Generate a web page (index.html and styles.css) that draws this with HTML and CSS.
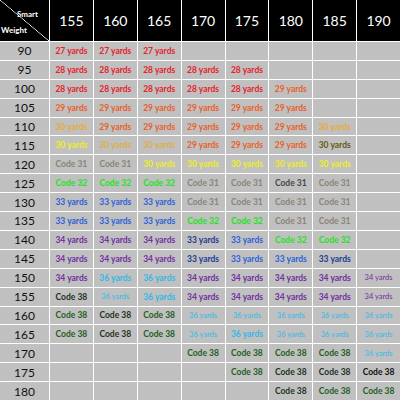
FILE: index.html
```html
<!doctype html>
<html lang="en">
	<head>
		<meta charset="UTF-8">
		<title>Smart / Weight</title>
		<link rel="stylesheet" href="styles.css">
	</head>
	<body>
		<div class="tableau">
			<div class="coin"><span class="smart">Smart</span><span class="weight">Weight</span></div>
			<div class="entete">155</div>
			<div class="entete">160</div>
			<div class="entete">165</div>
			<div class="entete">170</div>
			<div class="entete">175</div>
			<div class="entete">180</div>
			<div class="entete">185</div>
			<div class="entete">190</div>

			<div class="poids">90</div>
			<div class="case rouge">27 yards</div>
			<div class="case rouge">27 yards</div>
			<div class="case rouge">27 yards</div>
			<div class="case"></div>
			<div class="case"></div>
			<div class="case"></div>
			<div class="case"></div>
			<div class="case"></div>

			<div class="poids">95</div>
			<div class="case rouge">28 yards</div>
			<div class="case rouge">28 yards</div>
			<div class="case rouge">28 yards</div>
			<div class="case rouge">28 yards</div>
			<div class="case rouge">28 yards</div>
			<div class="case"></div>
			<div class="case"></div>
			<div class="case"></div>

			<div class="poids">100</div>
			<div class="case rouge">28 yards</div>
			<div class="case rouge">28 yards</div>
			<div class="case rouge">28 yards</div>
			<div class="case rouge">28 yards</div>
			<div class="case rouge">28 yards</div>
			<div class="case orange">29 yards</div>
			<div class="case"></div>
			<div class="case"></div>

			<div class="poids">105</div>
			<div class="case orange">29 yards</div>
			<div class="case orange">29 yards</div>
			<div class="case orange">29 yards</div>
			<div class="case orange">29 yards</div>
			<div class="case orange">29 yards</div>
			<div class="case orange">29 yards</div>
			<div class="case"></div>
			<div class="case"></div>

			<div class="poids">110</div>
			<div class="case clair">30 yards</div>
			<div class="case orange">29 yards</div>
			<div class="case orange">29 yards</div>
			<div class="case orange">29 yards</div>
			<div class="case orange">29 yards</div>
			<div class="case orange">29 yards</div>
			<div class="case clair">30 yards</div>
			<div class="case"></div>

			<div class="poids">115</div>
			<div class="case jaune">30 yards</div>
			<div class="case or">30 yards</div>
			<div class="case or">30 yards</div>
			<div class="case orange">29 yards</div>
			<div class="case orange">29 yards</div>
			<div class="case orange">29 yards</div>
			<div class="case olive">30 yards</div>
			<div class="case"></div>

			<div class="poids">120</div>
			<div class="case gris">Code 31</div>
			<div class="case gris">Code 31</div>
			<div class="case jaune">30 yards</div>
			<div class="case jaune">30 yards</div>
			<div class="case jaune">30 yards</div>
			<div class="case jaune">30 yards</div>
			<div class="case jaune">30 yards</div>
			<div class="case"></div>

			<div class="poids">125</div>
			<div class="case vert">Code 32</div>
			<div class="case vert">Code 32</div>
			<div class="case vert">Code 32</div>
			<div class="case gris">Code 31</div>
			<div class="case gris">Code 31</div>
			<div class="case fonce">Code 31</div>
			<div class="case gris">Code 31</div>
			<div class="case"></div>

			<div class="poids">130</div>
			<div class="case bleu">33 yards</div>
			<div class="case bleu">33 yards</div>
			<div class="case bleu">33 yards</div>
			<div class="case gris">Code 31</div>
			<div class="case gris">Code 31</div>
			<div class="case gris">Code 31</div>
			<div class="case gris">Code 31</div>
			<div class="case"></div>

			<div class="poids">135</div>
			<div class="case bleu">33 yards</div>
			<div class="case bleu">33 yards</div>
			<div class="case bleu">33 yards</div>
			<div class="case vert">Code 32</div>
			<div class="case vert">Code 32</div>
			<div class="case gris">Code 31</div>
			<div class="case gris">Code 31</div>
			<div class="case"></div>

			<div class="poids">140</div>
			<div class="case violet">34 yards</div>
			<div class="case violet">34 yards</div>
			<div class="case violet">34 yards</div>
			<div class="case marine">33 yards</div>
			<div class="case bleu">33 yards</div>
			<div class="case vert">Code 32</div>
			<div class="case vert">Code 32</div>
			<div class="case"></div>

			<div class="poids">145</div>
			<div class="case violet">34 yards</div>
			<div class="case violet">34 yards</div>
			<div class="case violet">34 yards</div>
			<div class="case marine">33 yards</div>
			<div class="case bleu">33 yards</div>
			<div class="case bleu">33 yards</div>
			<div class="case marine">33 yards</div>
			<div class="case"></div>

			<div class="poids">150</div>
			<div class="case violet">34 yards</div>
			<div class="case cyan">36 yards</div>
			<div class="case cyan">36 yards</div>
			<div class="case violet">34 yards</div>
			<div class="case violet">34 yards</div>
			<div class="case violet">34 yards</div>
			<div class="case violet">34 yards</div>
			<div class="case violet petit">34 yards</div>

			<div class="poids">155</div>
			<div class="case noir">Code 38</div>
			<div class="case cyan petit">36 yards</div>
			<div class="case cyan">36 yards</div>
			<div class="case violet">34 yards</div>
			<div class="case violet">34 yards</div>
			<div class="case violet">34 yards</div>
			<div class="case violet">34 yards</div>
			<div class="case violet petit">34 yards</div>

			<div class="poids">160</div>
			<div class="case sapin">Code 38</div>
			<div class="case noir">Code 38</div>
			<div class="case sapin">Code 38</div>
			<div class="case cyan petit">36 yards</div>
			<div class="case cyan petit">36 yards</div>
			<div class="case cyan petit">36 yards</div>
			<div class="case cyan petit">36 yards</div>
			<div class="case cyan petit">36 yards</div>

			<div class="poids">165</div>
			<div class="case sapin">Code 38</div>
			<div class="case noir">Code 38</div>
			<div class="case sapin">Code 38</div>
			<div class="case cyan petit">36 yards</div>
			<div class="case cyan">36 yards</div>
			<div class="case cyan petit">36 yards</div>
			<div class="case cyan petit">36 yards</div>
			<div class="case cyan petit">36 yards</div>

			<div class="poids">170</div>
			<div class="case"></div>
			<div class="case"></div>
			<div class="case"></div>
			<div class="case sapin">Code 38</div>
			<div class="case sapin">Code 38</div>
			<div class="case sapin">Code 38</div>
			<div class="case sapin">Code 38</div>
			<div class="case cyan petit">36 yards</div>

			<div class="poids">175</div>
			<div class="case"></div>
			<div class="case"></div>
			<div class="case"></div>
			<div class="case"></div>
			<div class="case sapin">Code 38</div>
			<div class="case noir">Code 38</div>
			<div class="case noir">Code 38</div>
			<div class="case encre">Code 38</div>

			<div class="poids">180</div>
			<div class="case"></div>
			<div class="case"></div>
			<div class="case"></div>
			<div class="case"></div>
			<div class="case"></div>
			<div class="case noir">Code 38</div>
			<div class="case sapin">Code 38</div>
			<div class="case sapin">Code 38</div>
		</div>
	</body>
</html>
```
FILE: styles.css
```css
body
{
	margin: 0;
	background: #ffffff;
	font-family: "Lato", "Liberation Sans", sans-serif;
}
.tableau
{
	display: grid;
	grid-template-columns: 49px repeat(8, 1fr);
	grid-template-rows: 41px repeat(19, 1fr);
	gap: 1px;
	width: 400px;
	height: 400px;
	background: #ffffff;
}
.coin
{
	position: relative;
	background: linear-gradient(to top right, #000 calc(50% - 0.6px), #ffffff, #000 calc(50% + 0.6px));
	color: #ffffff;
	font-size: 8px;
	font-weight: bold;
}
.smart
{
	position: absolute;
	left: 17px;
	top: 9px;
}
.weight
{
	position: absolute;
	left: 1px;
	top: 25px;
}
.entete
{
	display: flex;
	align-items: center;
	justify-content: center;
	background: #000000;
	color: #ffffff;
	font-size: 14px;
}
.poids
{
	display: flex;
	align-items: center;
	justify-content: center;
	background: #c0c0c0;
	color: #111111;
	font-size: 12px;
}
.case
{
	display: flex;
	align-items: center;
	justify-content: center;
	background: #c0c0c0;
	font-size: 8.5px;
	font-weight: bold;
}
.petit
{
	font-size: 7.5px;
	font-weight: normal;
}
.rouge { color: #e4232c; }
.orange { color: #e8602a; }
.clair { color: #e8aa3c; }
.jaune { color: #eeee24; }
.or { color: #d8b048; }
.olive { color: #6a5812; }
.gris { color: #8a8478; }
.fonce { color: #474747; }
.vert { color: #22e222; }
.bleu { color: #2c62d8; }
.marine { color: #223c92; }
.violet { color: #7030a0; }
.cyan { color: #33b8e8; }
.sapin { color: #1f5f1f; }
.noir { color: #22331f; }
.encre { color: #111111; }
```
